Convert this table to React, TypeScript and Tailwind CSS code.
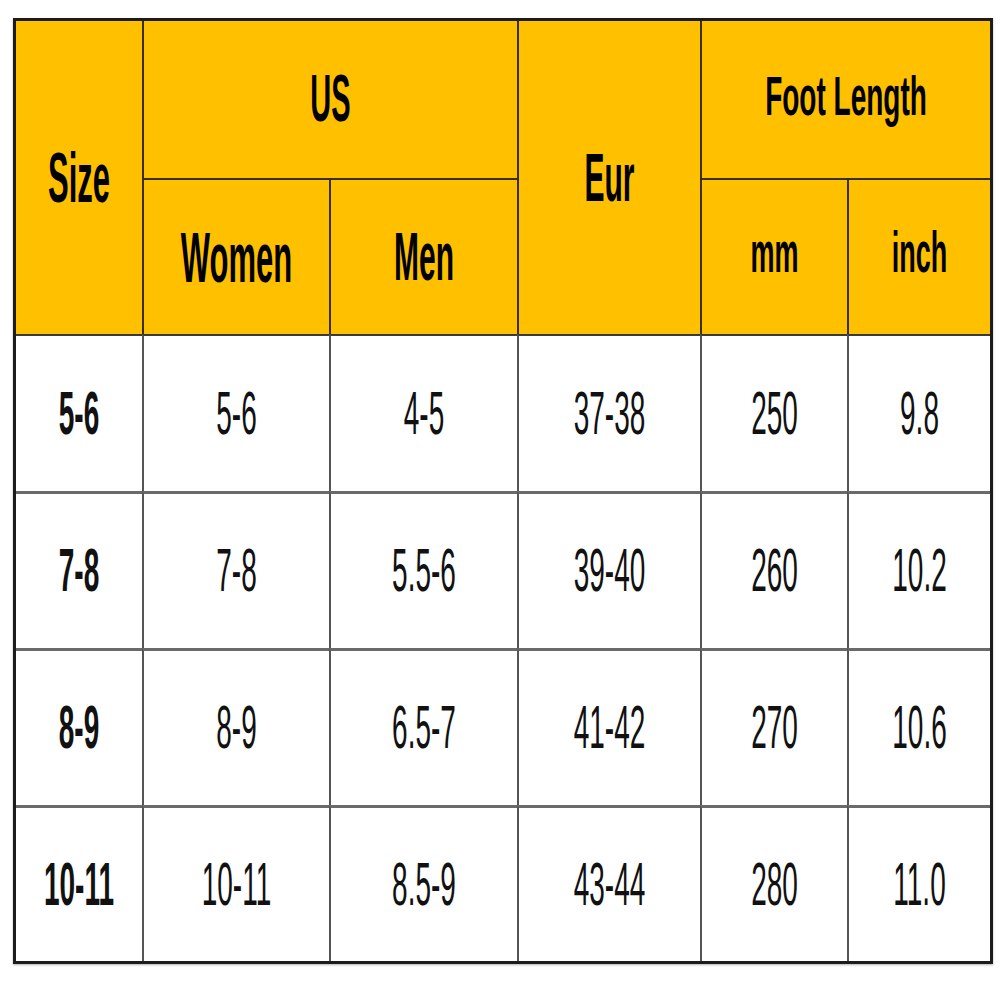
const rows = [
  ['5-6', '5-6', '4-5', '37-38', '250', '9.8'],
  ['7-8', '7-8', '5.5-6', '39-40', '260', '10.2'],
  ['8-9', '8-9', '6.5-7', '41-42', '270', '10.6'],
  ['10-11', '10-11', '8.5-9', '43-44', '280', '11.0'],
]

function Head({ children, size = 'text-[30px]' }: { children: React.ReactNode; size?: string }) {
  return (
    <span className={`inline-block ${size} font-bold leading-none text-black scale-y-[2.3]`}>{children}</span>
  )
}

export default function App() {
  return (
    <div className="h-[1000px] w-[1000px] bg-white pl-[13px] pt-[18px] font-['Liberation_Sans',Arial,sans-serif]">
      <div className="grid h-[946px] w-[980px] grid-cols-[126px_187px_188px_183px_147px_143px] grid-rows-[157px_156px_157px_157px_157px_156px] border-[3px] border-[#1c1c1c] shadow-[0_1px_2px_rgba(0,0,0,0.3)]">
        <div className="row-span-2 flex items-center justify-center bg-[#FFC000]">
          <Head size="text-[31px]">Size</Head>
        </div>
        <div className="col-span-2 flex items-center justify-center border-l-2 border-[#3a2f00] bg-[#FFC000]">
          <Head size="text-[29px]">US</Head>
        </div>
        <div className="row-span-2 flex items-center justify-center border-l-2 border-[#3a2f00] bg-[#FFC000]">
          <Head size="text-[30px]">Eur</Head>
        </div>
        <div className="col-span-2 flex items-center justify-center border-l-2 border-[#3a2f00] bg-[#FFC000] pb-[6px]">
          <span className="inline-block text-[28px] font-bold leading-none text-black scale-y-[2]">Foot Length</span>
        </div>
        <div className="flex items-center justify-center border-l-2 border-t-2 border-[#3a2f00] bg-[#FFC000]">
          <Head size="text-[31px]">Women</Head>
        </div>
        <div className="flex items-center justify-center border-l-2 border-t-2 border-[#3a2f00] bg-[#FFC000]">
          <Head size="text-[30px]">Men</Head>
        </div>
        <div className="flex items-center justify-center border-l-2 border-t-2 border-[#3a2f00] bg-[#FFC000] pb-[6px]">
          <span className="inline-block text-[27px] font-bold leading-none text-black scale-y-[2.1]">mm</span>
        </div>
        <div className="flex items-center justify-center border-l-2 border-t-2 border-[#3a2f00] bg-[#FFC000] pb-[6px]">
          <span className="inline-block text-[27px] font-bold leading-none text-black scale-y-[2.1]">inch</span>
        </div>
        {rows.map((r, ri) =>
          r.map((v, ci) => (
            <div
              key={`${ri}-${ci}`}
              className={`flex items-center justify-center border-[#555] bg-white ${ci > 0 ? 'border-l-2' : ''} ${
                ri === 0 ? 'border-t-2 border-t-[#3a3a3a]' : 'border-t-[3px] border-t-[#6a6a6a]'
              }`}
            >
              <span
                className={`inline-block text-[28px] leading-none text-[#111] scale-y-[2.2] ${
                  ci === 0 ? 'font-bold' : 'font-normal'
                }`}
              >
                {v}
              </span>
            </div>
          ))
        )}
      </div>
    </div>
  )
}
